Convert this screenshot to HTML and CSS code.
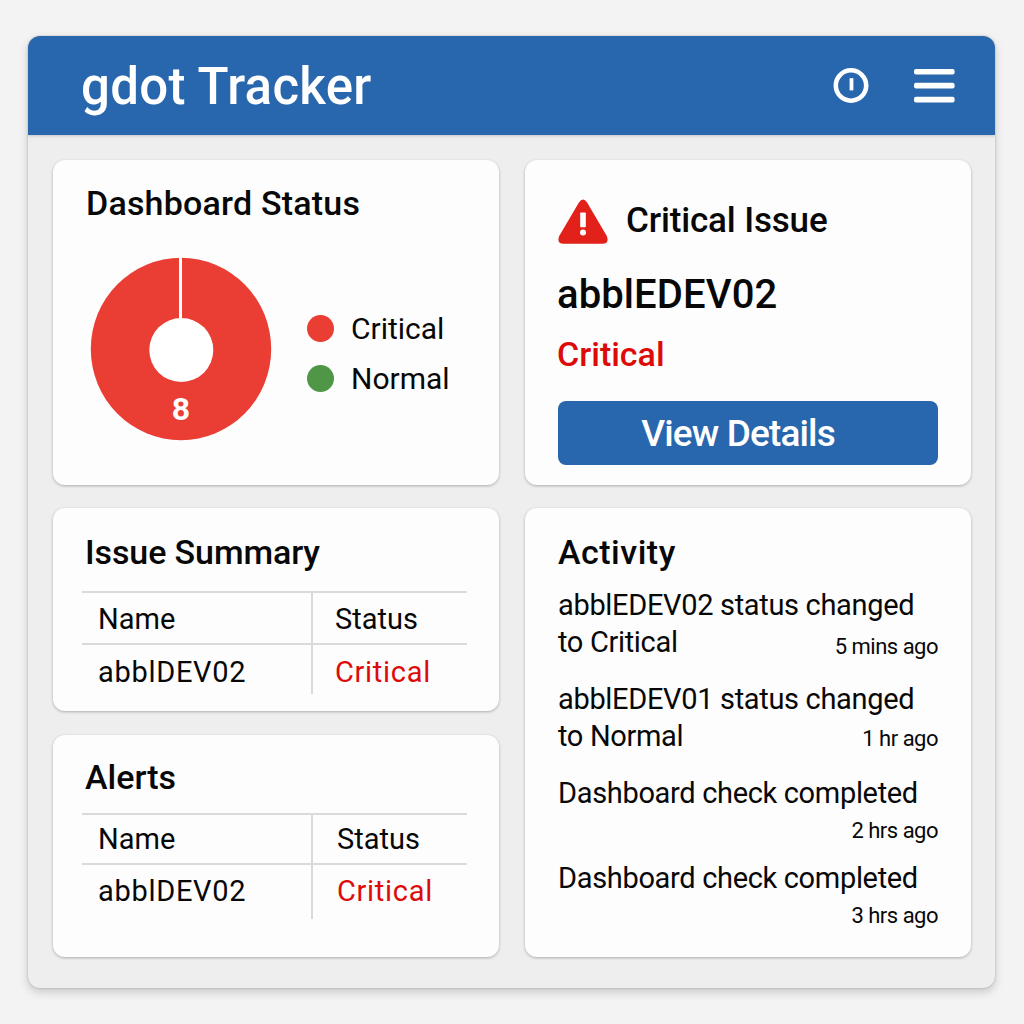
FILE: index.html
```
<!DOCTYPE html>
<html lang="en">
<head>
    <meta charset="utf-8">
    <title>gdot Tracker</title>
    <link rel="stylesheet" href="styles.css">
</head>
<body>
<div class="app">
    <header class="header">
        <h1 class="brand">gdot Tracker</h1>
        <div class="header-icons">
            <svg class="icon-clock" width="36" height="36" viewBox="0 0 36 36">
                <circle cx="18" cy="17.5" r="15.2" fill="none" stroke="#fff" stroke-width="4.6"/>
                <rect x="16.6" y="10.2" width="3.8" height="12.2" fill="#fff"/>
            </svg>
            <svg class="icon-menu" width="41" height="34" viewBox="0 0 41 34">
                <rect x="0" y="0" width="40.6" height="5.6" rx="2" fill="#fff"/>
                <rect x="0" y="13.8" width="40.6" height="5.6" rx="2" fill="#fff"/>
                <rect x="0" y="27.8" width="40.6" height="5.6" rx="2" fill="#fff"/>
            </svg>
        </div>
    </header>

    <main class="board">
        <div class="column">
            <section class="card status">
                <h2 class="card-title">Dashboard Status</h2>
                <div class="status-body">
                    <svg class="donut" width="182" height="184" viewBox="0 0 182 184">
                        <ellipse cx="91" cy="92" rx="90.2" ry="91.2" fill="#ea3d34"/>
                        <rect x="89" y="0" width="3" height="70" fill="#fff"/>
                        <circle cx="91.3" cy="93" r="32" fill="#fff"/>
                        <text class="donut-count" x="91" y="163" text-anchor="middle">8</text>
                    </svg>
                    <ul class="legend">
                        <li><span class="dot dot-critical"></span><span class="label">Critical</span></li>
                        <li><span class="dot dot-normal"></span><span class="label">Normal</span></li>
                    </ul>
                </div>
            </section>

            <section class="card summary">
                <h2 class="card-title">Issue Summary</h2>
                <div class="table">
                    <div class="row row-head"><span class="cell">Name</span><span class="cell">Status</span></div>
                    <div class="row"><span class="cell">abblDEV02</span><span class="cell critical">Critical</span></div>
                </div>
            </section>

            <section class="card alerts">
                <h2 class="card-title">Alerts</h2>
                <div class="table">
                    <div class="row row-head"><span class="cell">Name</span><span class="cell">Status</span></div>
                    <div class="row"><span class="cell">abblDEV02</span><span class="cell critical">Critical</span></div>
                </div>
            </section>
        </div>

        <div class="column">
            <section class="card issue">
                <div class="issue-head">
                    <svg width="50" height="46" viewBox="0 0 50 46">
                        <path d="M20.9 3.4Q25 -2.6 29.1 3.4L48.8 37Q51.6 44.6 44.5 44.8H5.5Q-1.6 44.6 1.2 37Z" fill="#e2211a"/>
                        <rect x="22.2" y="13.4" width="5.6" height="14.8" rx=".8" fill="#fff"/>
                        <circle cx="25" cy="33.4" r="3" fill="#fff"/>
                    </svg>
                    <h2 class="issue-title">Critical Issue</h2>
                </div>
                <p class="issue-name">abblEDEV02</p>
                <p class="issue-level critical">Critical</p>
                <button class="btn">View Details</button>
            </section>

            <section class="card activity">
                <h2 class="card-title">Activity</h2>
                <ul class="feed">
                    <li class="entry entry-long">
                        <p class="line">abblEDEV02 status changed</p>
                        <div class="line-end"><p class="line">to Critical</p><time>5 mins ago</time></div>
                    </li>
                    <li class="entry entry-long">
                        <p class="line">abblEDEV01 status changed</p>
                        <div class="line-end"><p class="line">to Normal</p><time>1 hr ago</time></div>
                    </li>
                    <li class="entry">
                        <p class="line">Dashboard check completed</p>
                        <time>2 hrs ago</time>
                    </li>
                    <li class="entry">
                        <p class="line">Dashboard check completed</p>
                        <time>3 hrs ago</time>
                    </li>
                </ul>
            </section>
        </div>
    </main>
</div>
</body>
</html>
```
FILE: styles.css
```
* {
    box-sizing: border-box;
}
body {
    margin: 0;
    padding: 36px 29px 0 28px;
    height: 1024px;
    background: #f3f3f3;
    color: #080808;
    font-family: Roboto, "Liberation Sans", sans-serif;
}
h1, h2, p, ul {
    margin: 0;
    padding: 0;
    font-weight: 500;
}
ul {
    list-style: none;
    font-weight: 400;
}
.app {
    height: 952px;
    border-radius: 12px;
    background: #eeeeee;
    box-shadow: 0 0 2px rgba(0, 0, 0, .25), 0 4px 10px rgba(0, 0, 0, .18);
    overflow: hidden;
}

/* header */
.header {
    display: flex;
    justify-content: space-between;
    align-items: center;
    height: 99px;
    padding: 0 40px 0 53px;
    background: #2866ad;
    box-shadow: 0 1px 3px rgba(0, 0, 0, .18);
    color: #fff;
}
.brand {
    font-size: 51px;
    line-height: 99px;
    padding-top: 2px;
    letter-spacing: .3px;
}
.header-icons {
    display: flex;
    align-items: center;
    gap: 45px;
}

/* cards */
.board {
    display: flex;
    gap: 26px;
    padding: 25px 24px 0 25px;
}
.column {
    display: flex;
    flex-direction: column;
    width: 446px;
    gap: 23px;
}
.card {
    padding: 0 33px 0 32px;
    border-radius: 12px;
    background: #fdfdfd;
    box-shadow: 0 1px 3px rgba(0, 0, 0, .28);
}
.card-title {
    font-size: 34px;
    line-height: 40px;
}
.critical {
    color: #dd0a0a;
}

/* dashboard status */
.status {
    height: 325px;
    padding: 23px 33px 0;
}
.status .card-title {
    letter-spacing: .2px;
}
.status-body {
    display: flex;
    align-items: flex-start;
    padding: 34px 0 0 4px;
}
.donut-count {
    font-size: 32px;
    font-weight: 700;
    fill: #fff;
}
.legend {
    padding: 46px 0 0 35px;
}
.legend li {
    display: flex;
    align-items: center;
    height: 50px;
    font-size: 30px;
    line-height: 38px;
}
.label {
    padding-top: 2px;
}
.dot {
    width: 27px;
    height: 27px;
    margin-right: 17px;
    border-radius: 50%;
}
.dot-critical {
    background: #ea3d34;
}
.dot-normal {
    background: #4f9646;
}

/* tables */
.summary {
    height: 203px;
    margin-bottom: 1px;
    padding-top: 24px;
}
.summary .card-title {
    letter-spacing: -.1px;
}
.alerts {
    height: 222px;
    padding-top: 22px;
}
.table {
    width: 385px;
    margin: 19px 0 0 -3px;
    border-top: 2px solid #dadada;
}
.row {
    display: grid;
    grid-template-columns: 229px 1fr;
    height: 49px;
}
.row-head {
    height: 52px;
    border-bottom: 2px solid #dadada;
}
.cell {
    height: 49px;
    padding-left: 16px;
    font-size: 29px;
    line-height: 54px;
    letter-spacing: .7px;
}
.cell + .cell {
    padding-left: 22px;
    border-left: 2px solid #dadada;
}
.row-head .cell {
    height: 50px;
    line-height: 52px;
    letter-spacing: 0;
}
.alerts .table {
    margin-top: 16px;
}
.alerts .row {
    height: 54px;
}
.alerts .cell {
    height: 54px;
    line-height: 53px;
}
.alerts .row-head {
    height: 50px;
}
.alerts .row-head .cell {
    height: 48px;
    line-height: 48px;
}
.alerts .cell + .cell {
    padding-left: 24px;
}

/* critical issue */
.issue {
    height: 325px;
    padding: 39px 33px 0;
}
.issue-head {
    display: flex;
    align-items: center;
    gap: 18px;
    height: 46px;
}
.issue-title {
    font-size: 35px;
    line-height: 40px;
    padding-bottom: 2px;
    letter-spacing: -.15px;
}
.issue-name {
    margin: 25px 0 0 -1px;
    font-size: 40px;
    line-height: 50px;
    letter-spacing: .1px;
}
.issue-level {
    margin: 14px 0 0 -1px;
    font-size: 34px;
    line-height: 40px;
}
.btn {
    display: block;
    width: 380px;
    height: 64px;
    margin-top: 27px;
    padding: 0 20px 0 0;
    border: none;
    border-radius: 8px;
    background: #2866ad;
    color: #fff;
    font: 500 37px Roboto, "Liberation Sans", sans-serif;
    letter-spacing: -.85px;
}

/* activity */
.activity {
    height: 449px;
    padding: 24px 33px 0;
}
.activity .card-title {
    letter-spacing: .5px;
}
.feed {
    padding-top: 15px;
}
.entry {
    display: flex;
    flex-direction: column;
    height: 85px;
}
.entry-long {
    height: 94px;
}
.line {
    font-size: 29px;
    font-weight: 400;
    line-height: 37px;
    letter-spacing: -.33px;
}
.line-end {
    display: flex;
    justify-content: space-between;
}
time {
    align-self: flex-end;
    font-size: 22px;
    line-height: 28px;
    letter-spacing: -.5px;
}
.entry-long:nth-child(2) time {
    line-height: 32px;
}
.entry > time {
    margin-top: 5px;
}
```
